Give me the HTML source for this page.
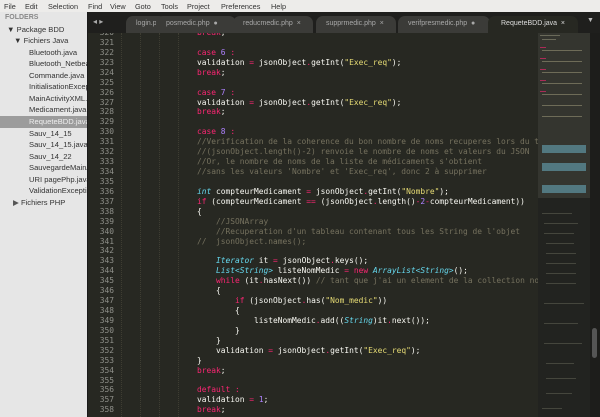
<!DOCTYPE html>
<html><head><meta charset="utf-8"><style>
*{margin:0;padding:0;box-sizing:border-box}
body{width:600px;height:417px;overflow:hidden;background:#272822;position:relative;font-family:"Liberation Sans","DejaVu Sans",sans-serif}
#menu{position:absolute;left:0;top:0;width:600px;height:12px;background:#edecea;font-size:7.3px;color:#333}
#menu span{position:absolute;top:1.5px}
#side{position:absolute;left:0;top:12px;width:88px;height:405px;background:#e6e6e6;border-right:1px solid #1a1a1a;font-size:7.6px;color:#333;overflow:hidden}
#side div{position:absolute;white-space:nowrap;height:11.6px;line-height:11.6px}
#side .sel{left:0;width:87px;background:#9c9c9c;color:#eee;padding-left:29px}
#tabs{position:absolute;left:88px;top:12px;width:512px;height:21px;background:#1f1f1d}
.tab{position:absolute;top:4px;height:17px;background:#3b3b38;border-radius:7px 7px 0 0;color:#a8a8a8;font-size:7px;line-height:15px;padding-left:10px;white-space:nowrap;overflow:hidden}
.tab.act{background:#272822;color:#ddd}
#code{position:absolute;left:88px;top:33px;width:450px;height:384px;overflow:hidden;font-family:"DejaVu Sans Mono","Liberation Mono",monospace;font-size:7.9px;color:#f8f8f2}
.ln{position:absolute;left:0;width:26px;text-align:right;color:#8f908a}
.tx{position:absolute;left:109px;white-space:pre}
.g{position:absolute;top:0;width:0;height:384px;border-left:1px dotted #3e3d32}
.k{color:#f92672}.s{color:#e6db74}.n{color:#ae81ff}.c{color:#75715e}.t{color:#66d9ef;font-style:italic}.o{color:#f92672}
#mini{position:absolute;left:538px;top:33px;width:52px;height:384px;background:#222320}
#scroll{position:absolute;left:590px;top:33px;width:10px;height:384px;background:#1d1d1b}
</style></head><body>
<div id="menu"><span style="left:4px">File</span><span style="left:25px">Edit</span><span style="left:48px">Selection</span><span style="left:88px">Find</span><span style="left:110px">View</span><span style="left:135px">Goto</span><span style="left:161px">Tools</span><span style="left:187px">Project</span><span style="left:221px">Preferences</span><span style="left:271px">Help</span></div>
<div id="side">
<div style="left:5px;top:0;color:#888;font-weight:bold;font-size:7px">FOLDERS</div>
<div style="left:7px;top:11.5px">▼ Package BDD</div>
<div style="left:14px;top:23px">▼ Fichiers Java</div>
<div style="left:29px;top:34.5px">Bluetooth.java</div>
<div style="left:29px;top:46px">Bluetooth_Netbeans.java</div>
<div style="left:29px;top:57.5px">Commande.java</div>
<div style="left:29px;top:69px">InitialisationException.java</div>
<div style="left:29px;top:80.5px">MainActivityXML.java</div>
<div style="left:29px;top:92px">Medicament.java</div>
<div class="sel" style="top:104px">RequeteBDD.java</div>
<div style="left:29px;top:115.5px">Sauv_14_15</div>
<div style="left:29px;top:127px">Sauv_14_15.java</div>
<div style="left:29px;top:138.5px">Sauv_14_22</div>
<div style="left:29px;top:150px">SauvegardeMainActivity</div>
<div style="left:29px;top:161.5px">URI pagePhp.java</div>
<div style="left:29px;top:173px">ValidationException.java</div>
<div style="left:13px;top:184.5px;color:#555">▶ <span style="color:#333">Fichiers PHP</span></div>
</div>
<div id="tabs">
<div style="position:absolute;left:5px;top:5px;color:#aaa;font-size:8px">◂ ▸</div>
<div class="tab" style="left:38px;width:40px">login.php</div>
<div class="tab" style="left:68px;width:80px">posmedic.php &nbsp;●</div>
<div class="tab" style="left:145px;width:80px">reducmedic.php &nbsp;×</div>
<div class="tab" style="left:228px;width:80px">supprmedic.php &nbsp;×</div>
<div class="tab" style="left:310px;width:92px">verifpresmedic.php &nbsp;●</div>
<div class="tab act" style="left:400px;width:90px;padding-left:13px">RequeteBDD.java &nbsp;×</div>
<div style="position:absolute;left:499px;top:5px;color:#bbb;font-size:7px">▼</div>
</div>
<div id="code">
<div class="g" style="left:33px"></div><div class="g" style="left:52px"></div><div class="g" style="left:71px"></div><div class="g" style="left:90px"></div>
<div id="lines"></div>
</div>
<div id="mini">
<div style="position:absolute;left:0;top:0;width:52px;height:165px;background:#34352f"></div>
<svg width="52" height="384" style="position:absolute;left:0;top:0">
<g fill="#6a6a5a"><rect x="2" y="2" width="20" height="1"/><rect x="4" y="6" width="14" height="1"/></g>
<g fill="#f92672" opacity=".6"><rect x="2" y="14" width="6" height="1"/><rect x="2" y="25" width="6" height="1"/><rect x="2" y="36" width="6" height="1"/><rect x="2" y="47" width="6" height="1"/><rect x="2" y="58" width="6" height="1"/></g>
<g fill="#b5b08a" opacity=".45"><rect x="4" y="17" width="40" height="1"/><rect x="4" y="28" width="40" height="1"/><rect x="4" y="39" width="40" height="1"/><rect x="4" y="50" width="40" height="1"/><rect x="4" y="61" width="40" height="1"/><rect x="4" y="72" width="40" height="1"/><rect x="4" y="83" width="40" height="1"/></g>
<rect x="4" y="112" width="44" height="8" fill="#5a8a95" opacity=".8"/><rect x="4" y="130" width="44" height="8" fill="#5a8a95" opacity=".8"/><rect x="4" y="152" width="44" height="8" fill="#5a8a95" opacity=".8"/>
<g fill="#7a7a6a" opacity=".4"><rect x="4" y="180" width="30" height="1"/><rect x="6" y="190" width="34" height="1"/><rect x="6" y="200" width="30" height="1"/><rect x="8" y="210" width="28" height="1"/><rect x="8" y="220" width="30" height="1"/><rect x="8" y="230" width="30" height="1"/><rect x="8" y="240" width="30" height="1"/><rect x="8" y="250" width="30" height="1"/><rect x="6" y="270" width="40" height="1"/><rect x="6" y="290" width="34" height="1"/><rect x="6" y="310" width="38" height="1"/><rect x="8" y="330" width="28" height="1"/><rect x="8" y="345" width="30" height="1"/><rect x="8" y="360" width="26" height="1"/><rect x="4" y="375" width="20" height="1"/></g>
</svg>
</div>
<div id="scroll"><div style="position:absolute;left:2px;top:295px;width:5px;height:30px;background:#555;border-radius:3px"></div></div>
<script>
var L=[
[320,'                    <span class="k">break</span>;'],
[321,''],
[322,'                    <span class="k">case</span> <span class="n">6</span> <span class="k">:</span>'],
[323,'                    validation <span class="o">=</span> jsonObject<span class="o">.</span>getInt(<span class="s">"Exec_req"</span>);'],
[324,'                    <span class="k">break</span>;'],
[325,''],
[326,'                    <span class="k">case</span> <span class="n">7</span> <span class="k">:</span>'],
[327,'                    validation <span class="o">=</span> jsonObject<span class="o">.</span>getInt(<span class="s">"Exec_req"</span>);'],
[328,'                    <span class="k">break</span>;'],
[329,''],
[330,'                    <span class="k">case</span> <span class="n">8</span> <span class="k">:</span>'],
[331,'                    <span class="c">//Verification de la coherence du bon nombre de noms recuperes lors du tr</span>'],
[332,'                    <span class="c">//(jsonObject.length()-2) renvoie le nombre de noms et valeurs du JSON</span>'],
[333,'                    <span class="c">//Or, le nombre de noms de la liste de médicaments s\'obtient</span>'],
[334,'                    <span class="c">//sans les valeurs \'Nombre\' et \'Exec_req\', donc 2 à supprimer</span>'],
[335,''],
[336,'                    <span class="t">int</span> compteurMedicament <span class="o">=</span> jsonObject<span class="o">.</span>getInt(<span class="s">"Nombre"</span>);'],
[337,'                    <span class="k">if</span> (compteurMedicament <span class="o">==</span> (jsonObject<span class="o">.</span>length()<span class="o">-</span><span class="n">2</span><span class="o">-</span>compteurMedicament))'],
[338,'                    {'],
[339,'                        <span class="c">//JSONArray</span>'],
[340,'                        <span class="c">//Recuperation d\'un tableau contenant tous les String de l\'objet</span>'],
[341,'                    <span class="c">//  jsonObject.names();</span>'],
[342,''],
[343,'                        <span class="t">Iterator</span> it <span class="o">=</span> jsonObject<span class="o">.</span>keys();'],
[344,'                        <span class="t">List&lt;String&gt;</span> listeNomMedic <span class="o">=</span> <span class="k">new</span> <span class="t">ArrayList&lt;String&gt;</span>();'],
[345,'                        <span class="k">while</span> (it<span class="o">.</span>hasNext()) <span class="c">// tant que j\'ai un element de la collection non</span>'],
[346,'                        {'],
[347,'                            <span class="k">if</span> (jsonObject<span class="o">.</span>has(<span class="s">"Nom_medic"</span>))'],
[348,'                            {'],
[349,'                                listeNomMedic<span class="o">.</span>add((<span class="t">String</span>)it<span class="o">.</span>next());'],
[350,'                            }'],
[351,'                        }'],
[352,'                        validation <span class="o">=</span> jsonObject<span class="o">.</span>getInt(<span class="s">"Exec_req"</span>);'],
[353,'                    }'],
[354,'                    <span class="k">break</span>;'],
[355,''],
[356,'                    <span class="k">default</span> <span class="k">:</span>'],
[357,'                    validation <span class="o">=</span> <span class="n">1</span>;'],
[358,'                    <span class="k">break</span>;']];
var h='';
L.forEach(function(l,i){var y=-5+i*9.93;h+='<div class="ln" style="top:'+y+'px">'+l[0]+'</div><div class="tx" style="left:14px;top:'+y+'px">'+l[1]+'</div>';});
document.getElementById('lines').innerHTML=h;
</script>
</body></html>
